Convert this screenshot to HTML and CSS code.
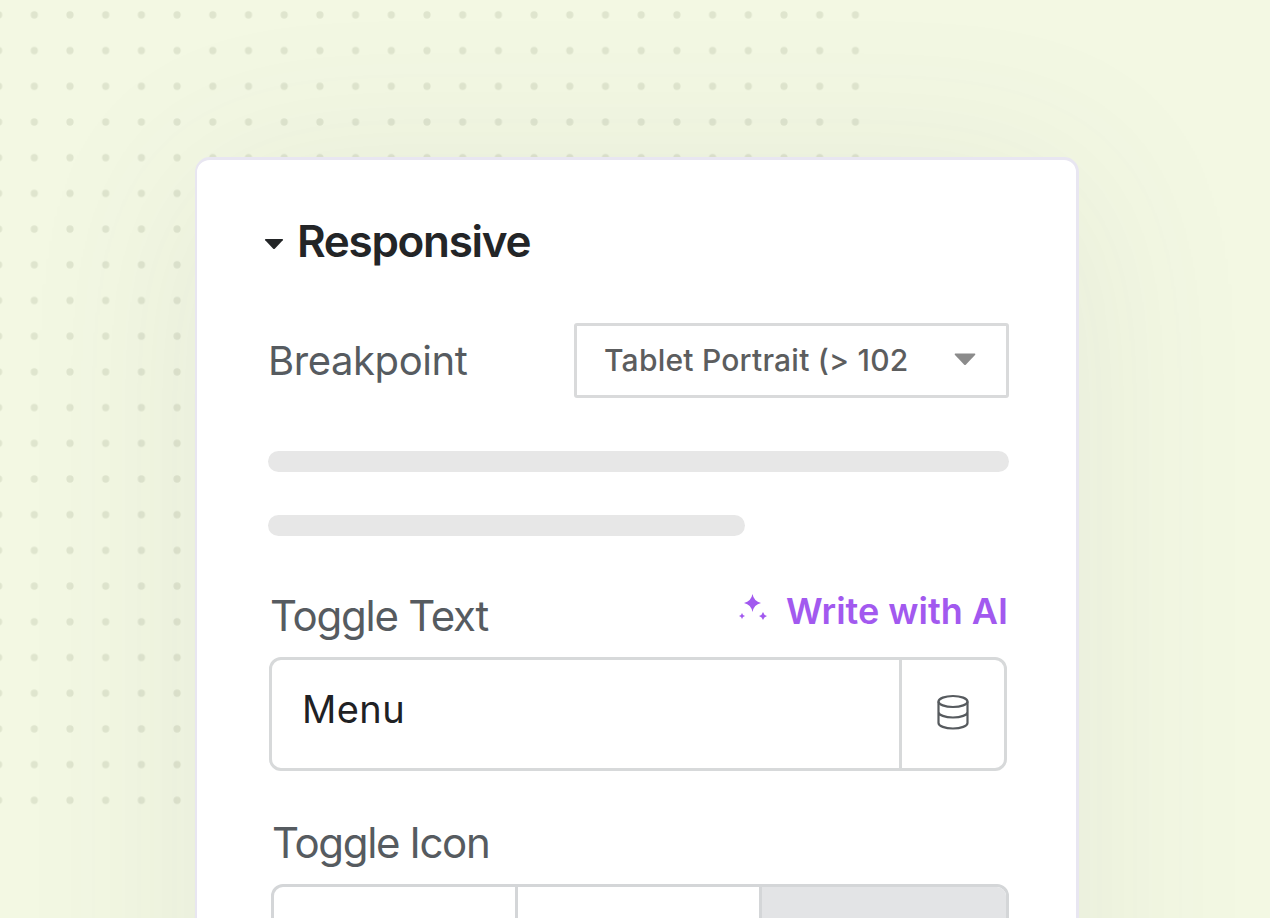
FILE: index.html
```html
<!DOCTYPE html>
<html lang="en">
<head>
<meta charset="utf-8">
<title>Responsive settings</title>
<link rel="stylesheet" href="styles.css">
</head>
<body>
<main class="stage">
  <svg class="dots" width="1270" height="918" aria-hidden="true">
    <defs>
      <pattern id="dot" x="-19.25" y="-2.95" width="35.7" height="35.7" patternUnits="userSpaceOnUse">
        <circle cx="17.85" cy="17.85" r="3.6" fill="#dfe5ce"/>
      </pattern>
    </defs>
    <path d="M0 0H870V170H210V815H0Z" fill="url(#dot)"/>
  </svg>
  <section class="panel">
    <h2 class="heading">
      <svg class="caret" width="20" height="12" viewBox="0 0 20 12"><path d="M1.6 1H18.4Q19.6 1.2 18.8 2.2L11 10.4Q10 11.4 9 10.4L1.2 2.2Q.4 1.2 1.6 1Z" fill="#232527"/></svg>
      <span class="heading-text">Responsive</span>
    </h2>
    <div class="field-row">
      <span class="label label-breakpoint">Breakpoint</span>
      <div class="select">
        <span class="select-text">Tablet Portrait (&gt; 102</span>
        <svg class="select-caret" width="22" height="13" viewBox="0 0 22 13"><path d="M1.3.5H20.7Q22 .7 21 1.9L12 11.6Q11 12.6 10 11.6L1 1.9Q0 .7 1.3.5Z" fill="#8b8b8b"/></svg>
      </div>
    </div>
    <div class="bar"></div>
    <div class="bar bar-short"></div>
    <div class="text-row">
      <span class="label label-text">Toggle Text</span>
      <span class="ai">
        <svg class="sparkles" width="30" height="28" viewBox="0 0 30 28" fill="#a259ef"><path d="M13.5 0Q14.8 7.3 22 9Q14.8 10.7 13.5 18Q12.200 10.700 5 9Q12.200 7.300 13.500 0Z"/><path d="M24 18Q24.800 21.200 28 22Q24.800 22.800 24 26Q23.200 22.800 20 22Q23.200 21.200 24 18Z"/><path d="M3 19Q3.500 21.500 6 22Q3.500 22.500 3 25Q2.500 22.500 0 22Q2.500 21.500 3 19Z"/></svg>
        <span class="ai-text">Write with AI</span>
      </span>
    </div>
    <div class="input">
      <div class="input-value"><span class="input-text">Menu</span></div>
      <div class="input-action">
        <svg class="database" width="34" height="36" viewBox="0 0 34 36" fill="none" stroke="#565a5e" stroke-width="2.2"><ellipse cx="17" cy="7.500" rx="14.500" ry="5.500"/><path d="M2.500 7.500V29C2.500 32 9 34.500 17 34.500S31.500 32 31.500 29V7.500M2.500 18C2.500 21 9 23.500 17 23.500S31.500 21 31.500 18"/></svg>
      </div>
    </div>
    <div class="label label-icon">Toggle Icon</div>
    <div class="segments">
      <div class="segment"></div>
      <div class="segment"></div>
      <div class="segment segment-active"></div>
    </div>
  </section>
</main>
</body>
</html>
```
FILE: styles.css
```css
* { box-sizing: border-box; }
body {
  margin: 0;
  font-family: Inter, "Liberation Sans", sans-serif;
}
.stage {
  position: relative;
  width: 1270px;
  height: 918px;
  padding: 157px 0 0 195px;
  overflow: hidden;
  background: #f3f8e3;
}
.dots { position: absolute; top: 0; left: 0; }
.panel {
  position: relative;
  width: 884px;
  height: 1000px;
  padding: 51px 67px 0 71px;
  border: 3px solid #e8e6f1;
  border-left-width: 2px;
  border-radius: 15px;
  background: #fff;
  box-shadow: 0 20px 190px rgba(85, 85, 110, .085);
}
.heading {
  display: flex;
  align-items: center;
  height: 60px;
  margin: 0 0 52px -4px;
  font-size: 44px;
  font-weight: 600;
  line-height: 60px;
  color: #232527;
}
.caret { margin: 5px 13px 0 0; }
.heading-text { letter-spacing: -1.3px; }
.field-row {
  display: flex;
  align-items: center;
  justify-content: space-between;
  height: 74px;
  margin-bottom: 54px;
}
.label { line-height: 50px; color: #565b60; white-space: nowrap; }
.label-breakpoint { padding-top: 2px; font-size: 40px; letter-spacing: -.42px; }
.select {
  display: flex;
  align-items: center;
  justify-content: space-between;
  width: 435px;
  height: 75px;
  padding: 0 30px 0 27px;
  border: 3px solid #d9dadb;
  border-radius: 3px;
  font-size: 30px;
  font-weight: 500;
  color: #5c5d5e;
}
.select-text { white-space: nowrap; letter-spacing: .23px; }
.select-caret { margin-bottom: 2px; }
.bar {
  height: 21px;
  margin-bottom: 43px;
  border-radius: 11px;
  background: #e7e7e7;
}
.bar-short { width: 477px; margin-bottom: 50px; }
.text-row {
  display: flex;
  justify-content: space-between;
  height: 71px;
  padding: 0 1px 0 2px;
}
.label-text { margin-top: 5px; font-size: 42px; letter-spacing: -1.25px; }
.ai {
  display: flex;
  align-items: flex-start;
  font-size: 36px;
  font-weight: 600;
  line-height: 50px;
  color: #a259ef;
  white-space: nowrap;
}
.sparkles { margin: 8px 17px 0 0; }
.input {
  display: flex;
  width: 738px;
  height: 114px;
  margin: 0 0 47px 1px;
  border: 3px solid #d7d9da;
  border-radius: 12px;
}
.input-value {
  flex: 1;
  padding: 24px 0 0 30px;
  font-size: 38px;
  line-height: 50px;
  letter-spacing: .4px;
  color: #1f2124;
}
.input-action {
  display: flex;
  align-items: center;
  justify-content: center;
  width: 105px;
  border-left: 3px solid #d7d9da;
}
.database { margin-bottom: 4px; }
.label-icon { padding-left: 4px; font-size: 42px; letter-spacing: -1.35px; }
.segments {
  display: grid;
  grid-template-columns: 241px 244px 1fr;
  width: 738px;
  height: 110px;
  margin: 16px 0 0 3px;
  border: 3px solid #d4d6d8;
  border-radius: 12px;
  overflow: hidden;
}
.segment + .segment { border-left: 3px solid #d4d6d8; }
.segment-active { background: #e3e4e6; }
```
